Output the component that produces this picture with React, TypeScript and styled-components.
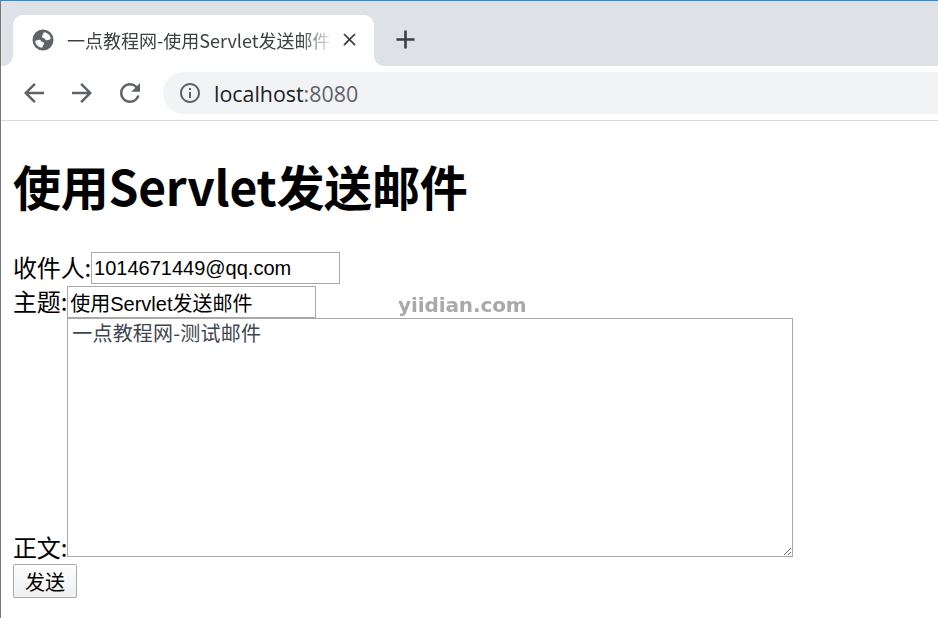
import styled, { createGlobalStyle } from "styled-components";

const CJK = `"Noto Sans CJK SC", sans-serif`;
const LATIN_CJK = `"Liberation Sans", "Noto Sans CJK SC", sans-serif`;

const GlobalStyle = createGlobalStyle`
  html, body {
    margin: 0;
    padding: 0;
    background: #fff;
    overflow: hidden;
  }
`;

const Window = styled.div`
  position: relative;
  width: 938px;
  height: 618px;
  box-sizing: border-box;
  border-top: 1px solid #4a86b8;
  border-left: 1px solid #777;
  overflow: hidden;
`;

const TabStrip = styled.div`
  display: flex;
  align-items: flex-end;
  height: 65px;
  padding-left: 12px;
  background: #dee1e6;
`;

const Tab = styled.div`
  position: relative;
  display: flex;
  align-items: center;
  box-sizing: border-box;
  width: 361px;
  height: 51px;
  padding: 0 14px 2px 19px;
  background: #fff;
  border-radius: 10px 10px 0 0;
  color: #3c4043;

  &::before,
  &::after {
    content: "";
    position: absolute;
    bottom: 0;
    width: 10px;
    height: 10px;
  }
  &::before {
    left: -10px;
    background: radial-gradient(circle at 0 0, #dee1e6 9.5px, #fff 10px);
  }
  &::after {
    right: -10px;
    background: radial-gradient(circle at 100% 0, #dee1e6 9.5px, #fff 10px);
  }
`;

const TabTitle = styled.span`
  flex: 1;
  margin: 0 6px 0 13px;
  overflow: hidden;
  white-space: nowrap;
  font: 18px ${CJK};
  -webkit-mask-image: linear-gradient(to right, #000 88%, transparent 100%);
  mask-image: linear-gradient(to right, #000 88%, transparent 100%);
`;

const NewTab = styled.div`
  display: flex;
  margin: 0 0 11px 16px;
  color: #3c4043;
`;

const Toolbar = styled.div`
  display: flex;
  align-items: center;
  gap: 18px;
  height: 54px;
  padding-left: 18px;
  border-bottom: 1px solid #d9d9d9;
  color: #5f6368;
`;

const Omnibox = styled.div`
  display: flex;
  align-items: center;
  flex: 1;
  height: 42px;
  padding-left: 15px;
  border-radius: 21px 0 0 21px;
  background: #f1f3f4;
`;

const Host = styled.span`
  margin-left: 12px;
  font: 21.4px "Open Sans", sans-serif;
  color: #202124;
`;

const Port = styled.span`
  color: #5f6368;
`;

const Page = styled.main`
  padding: 0 12px;
  color: #000;
`;

const Heading = styled.h1`
  margin: 33px 0 36px;
  font: 700 48px/62px ${CJK};
  letter-spacing: -0.25px;
`;

const Row = styled.div`
  display: flex;
  align-items: flex-end;

  & + & {
    margin-top: 2px;
  }
  &:last-of-type {
    margin-top: 0;
  }
`;

const Label = styled.label<{ $lift?: number }>`
  margin-bottom: ${({ $lift = 2 }) => $lift}px;
  font: 24px/30px ${CJK};
  letter-spacing: -0.15px;
`;

const TextInput = styled.input<{ $width: number }>`
  box-sizing: border-box;
  width: ${({ $width }) => $width}px;
  height: 32px;
  padding: 0 2px;
  border: 1px solid #a9a9a9;
  border-radius: 0;
  outline: none;
  font: 20px ${LATIN_CJK};
  color: #000;
`;

const Body = styled.textarea`
  display: block;
  box-sizing: border-box;
  width: 726px;
  height: 239px;
  margin: 0;
  padding: 2px 4px;
  border: 1px solid #a9a9a9;
  border-radius: 0;
  outline: none;
  font: 20px/24px ${CJK};
  letter-spacing: 0.2px;
  color: #3f4550;
`;

const Send = styled.button`
  display: block;
  box-sizing: border-box;
  width: 64px;
  height: 34px;
  margin-top: 7px;
  padding: 0;
  border: 1px solid #a9a9a9;
  border-radius: 2px;
  background: linear-gradient(#fdfdfd, #f0f0f0);
  font: 20px ${CJK};
  color: #000;
`;

const Watermark = styled.div`
  position: absolute;
  left: 397px;
  top: 292px;
  font: 700 20px "DejaVu Sans", sans-serif;
  letter-spacing: -0.1px;
  color: #a9a9a9;
  filter: blur(0.4px);
`;

function Icon({ d, size }: { d: string; size: number }) {
  return (
    <svg width={size} height={size} viewBox="0 0 24 24" fill="currentColor">
      <path d={d} />
    </svg>
  );
}

const BACK = "M20 11H7.83l5.59-5.59L12 4l-8 8 8 8 1.41-1.41L7.83 13H20v-2z";
const FORWARD = "M4 11h12.17l-5.59-5.59L12 4l8 8-8 8-1.41-1.41L16.17 13H4v-2z";
const RELOAD =
  "M17.65 6.35A7.958 7.958 0 0 0 12 4c-4.42 0-7.99 3.58-7.99 8s3.57 8 7.99 8c3.73 0 6.84-2.55 7.73-6h-2.08A5.99 5.99 0 0 1 12 18c-3.31 0-6-2.69-6-6s2.69-6 6-6c1.66 0 3.14.69 4.22 1.78L13 11h7V4l-2.35 2.35z";
const INFO =
  "M11 7h2v2h-2zm0 4h2v6h-2zm1-9C6.48 2 2 6.48 2 12s4.48 10 10 10 10-4.48 10-10S17.52 2 12 2zm0 18c-4.41 0-8-3.59-8-8s3.59-8 8-8 8 3.59 8 8-3.59 8-8 8z";
const CLOSE =
  "M19 6.41L17.59 5 12 10.59 6.41 5 5 6.41 10.59 12 5 17.59 6.41 19 12 13.41 17.59 19 19 17.59 13.41 12z";
const ADD = "M19 13h-6v6h-2v-6H5v-2h6V5h2v6h6v2z";

function Globe() {
  const blob =
    "M12 3.2c3.2.3 5.8 2.4 6.6 5.3.3 1 .1 1.6-.7 1.9l-3 .8c-1 .2-1.4-.3-1.9-1.2-.5-.8-1.2-1-2.2-1.2-1-.2-1.2-1-.6-2 .5-.9 1-2.6 1.8-3.6z";
  return (
    <svg width="22" height="22" viewBox="0 0 22 22">
      <circle cx="11" cy="11" r="10.5" fill="#5f6368" />
      <path d={blob} fill="#fff" />
      <path d={blob} fill="#fff" transform="rotate(180 11 11)" />
    </svg>
  );
}

export default function App() {
  return (
    <Window>
      <GlobalStyle />
      <TabStrip>
        <Tab>
          <Globe />
          <TabTitle>一点教程网-使用Servlet发送邮件</TabTitle>
          <Icon d={CLOSE} size={21} />
        </Tab>
        <NewTab>
          <Icon d={ADD} size={31} />
        </NewTab>
      </TabStrip>
      <Toolbar>
        <Icon d={BACK} size={30} />
        <Icon d={FORWARD} size={30} />
        <Icon d={RELOAD} size={30} />
        <Omnibox>
          <Icon d={INFO} size={24} />
          <Host>
            localhost<Port>:8080</Port>
          </Host>
        </Omnibox>
      </Toolbar>
      <Page>
        <Heading>使用Servlet发送邮件</Heading>
        <Row>
          <Label>收件人:</Label>
          <TextInput $width={249} defaultValue="1014671449@qq.com" />
        </Row>
        <Row>
          <Label>主题:</Label>
          <TextInput $width={249} defaultValue="使用Servlet发送邮件" />
        </Row>
        <Row>
          <Label $lift={-5}>正文:</Label>
          <Body defaultValue="一点教程网-测试邮件" />
        </Row>
        <Send>发送</Send>
      </Page>
      <Watermark>yiidian.com</Watermark>
    </Window>
  );
}
